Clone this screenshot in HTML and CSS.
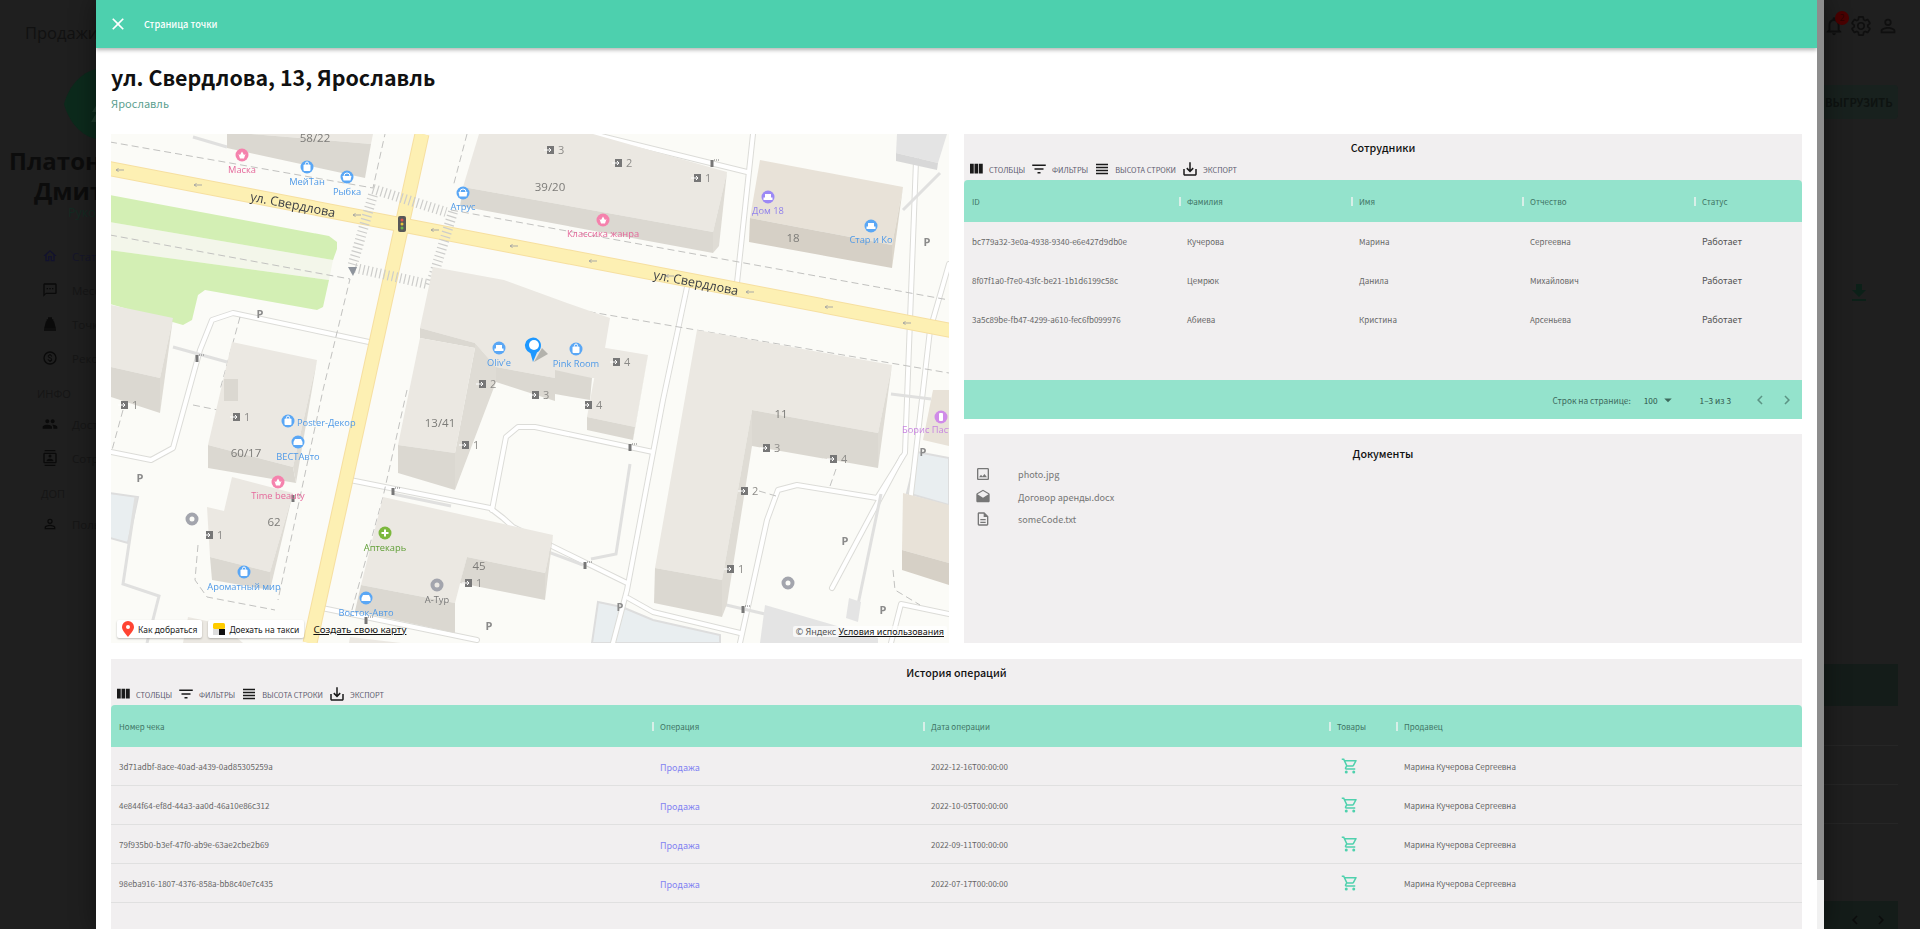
FILE: index.html
```html
<!doctype html>
<html lang="ru">
<head>
<meta charset="utf-8">
<title>Страница точки</title>
<link rel="stylesheet" href="styles.css">
</head>
<body>

<!-- page under the dialog -->
<div class="page">
	<aside class="sidebar">
		<div class="page-title">Продажи</div>
		<div class="logo">
			<svg viewBox="0 0 72 72" width="72" height="72"><path class="logo-leaf" d="M0 36C6 14 22 0 40 0c18 0 32 16 32 36S58 72 40 72C22 72 6 58 0 36z"/><path class="logo-tree" d="M36 12l7 10h-4l7 10h-4l8 12h-5l6 10H27l6-10h-5l8-12h-4l7-10h-4z"/></svg>
		</div>
		<div class="user-name first">Платонов</div>
		<div class="user-name second">Дмитрий</div>
		<div class="user-role">Руководитель</div>
		<nav class="nav">
			<a class="nav-item nav-active"><svg viewBox="0 0 24 24"><path d="M12 5.69l5 4.5V18h-2v-6H9v6H7v-7.81l5-4.5M12 3 2 12h3v8h6v-6h2v6h6v-8h3L12 3z"/></svg>Статистика</a>
			<a class="nav-item"><svg viewBox="0 0 24 24"><path d="M20 2H4c-1.1 0-2 .9-2 2v18l4-4h14c1.1 0 2-.9 2-2V4c0-1.1-.9-2-2-2zm0 14H6l-2 2V4h16v12zM7 9h2v2H7zm4 0h2v2h-2zm4 0h2v2h-2z"/></svg>Мессенджер</a>
			<a class="nav-item"><svg viewBox="0 0 24 24"><path d="M9 2h6v3h2v3h1l3 11H3L6 8h1V5h2V2zm-6 18h18v2H3v-2zM9 11h1.500v6H9zm2.500 0H13v6h-1.500zm2.500 0h1.500v6H14z"/></svg>Точки</a>
			<a class="nav-item"><svg viewBox="0 0 24 24"><path d="M12 2a10 10 0 1 0 0 20 10 10 0 0 0 0-20zm0 18a8 8 0 1 1 0-16 8 8 0 0 1 0 16zm.3-8.900c-1.800-.5-2.300-.9-2.300-1.600 0-.8.700-1.300 1.900-1.300 1.200 0 1.700.6 1.700 1.400h1.500c0-1.100-.7-2.200-2.100-2.500V6h-2v1.100c-1.300.3-2.300 1.100-2.300 2.400 0 1.500 1.300 2.300 3.100 2.800 1.700.4 2.100 1 2.100 1.600 0 .5-.3 1.200-1.900 1.200-1.400 0-2-.6-2-1.400H8.400c.1 1.500 1.200 2.300 2.600 2.600V18h2v-1.100c1.300-.2 2.300-1 2.300-2.400 0-1.900-1.700-2.900-3-3.400z"/></svg>Рекомендации</a>
			<div class="nav-head">ИНФО</div>
			<a class="nav-item"><svg viewBox="0 0 24 24"><path d="M16 11c1.660 0 3-1.340 3-3s-1.340-3-3-3-3 1.340-3 3 1.340 3 3 3zm-8 0c1.660 0 3-1.340 3-3S9.660 5 8 5 5 6.340 5 8s1.340 3 3 3zm0 2c-2.330 0-7 1.170-7 3.500V19h14v-2.500c0-2.330-4.670-3.500-7-3.500zm8 0c-.29 0-.62.020-.97.050 1.160.84 1.970 1.970 1.970 3.450V19h6v-2.500c0-2.330-4.670-3.500-7-3.500z"/></svg>Доступ</a>
			<a class="nav-item"><svg viewBox="0 0 24 24"><path d="M20 0H4v2h16V0zM4 24h16v-2H4v2zM20 4H4c-1.100 0-2 .9-2 2v12c0 1.100.9 2 2 2h16c1.100 0 2-.9 2-2V6c0-1.100-.9-2-2-2zm0 14H4V6h16v12zm-8-11.250a2.250 2.250 0 1 1 0 4.500 2.250 2.250 0 0 1 0-4.500zM17 17H7v-1.500c0-1.670 3.330-2.500 5-2.500s5 .83 5 2.500V17z"/></svg>Сотрудники</a>
			<div class="nav-head last">ДОП</div>
			<a class="nav-item"><svg viewBox="0 0 24 24"><path d="M12 5.900a2.100 2.100 0 1 1 0 4.200 2.100 2.100 0 0 1 0-4.200m0 9c2.970 0 6.100 1.460 6.100 2.100v1.100H5.900V17c0-.64 3.130-2.100 6.100-2.100M12 4a4 4 0 1 0 0 8 4 4 0 0 0 0-8zm0 9c-2.670 0-8 1.340-8 4v3h16v-3c0-2.660-5.330-4-8-4z"/></svg>Пользователи</a>
		</nav>
	</aside>

	<div class="page-right">
		<div class="top-icons">
			<span class="bell">
				<svg viewBox="0 0 24 24"><path d="M12 22c1.100 0 2-.9 2-2h-4c0 1.100.9 2 2 2zm6-6v-5c0-3.070-1.630-5.640-4.500-6.320V4c0-.83-.67-1.500-1.500-1.500s-1.500.67-1.500 1.500v.68C7.640 5.360 6 7.920 6 11v5l-2 2v1h16v-1l-2-2zm-2 1H8v-6c0-2.480 1.510-4.500 4-4.500s4 2.020 4 4.500v6z"/></svg>
				<span class="badge">2</span>
			</span>
			<svg viewBox="0 0 24 24"><path class="gear" d="M19.430 12.980c.04-.32.07-.64.07-.98s-.03-.66-.07-.98l2.110-1.650c.19-.15.24-.42.12-.64l-2-3.460c-.12-.22-.39-.3-.61-.22l-2.490 1c-.52-.4-1.080-.73-1.690-.98l-.38-2.650A.49.49 0 0 0 14 2h-4c-.25 0-.46.18-.49.42l-.38 2.650c-.61.25-1.170.59-1.690.98l-2.490-1c-.23-.09-.49 0-.61.22l-2 3.460c-.13.22-.07.49.12.64l2.110 1.650c-.04.32-.07.65-.07.98s.03.66.07.98l-2.110 1.650c-.19.15-.24.42-.12.64l2 3.460c.12.22.39.3.61.22l2.490-1c.52.4 1.080.73 1.690.98l.38 2.650c.03.24.24.42.49.42h4c.25 0 .46-.18.49-.42l.38-2.650c.61-.25 1.170-.59 1.690-.98l2.490 1c.23.09.49 0 .61-.22l2-3.460c.12-.22.07-.49-.12-.64l-2.110-1.650zM12 15.500a3.500 3.500 0 1 1 0-7 3.500 3.500 0 0 1 0 7z"/></svg>
			<svg viewBox="0 0 24 24"><path d="M12 5.900a2.100 2.100 0 1 1 0 4.200 2.100 2.100 0 0 1 0-4.200m0 9c2.970 0 6.100 1.460 6.100 2.100v1.100H5.900V17c0-.64 3.130-2.100 6.100-2.100M12 4a4 4 0 1 0 0 8 4 4 0 0 0 0-8zm0 9c-2.670 0-8 1.340-8 4v3h16v-3c0-2.660-5.330-4-8-4z"/></svg>
		</div>
		<div class="upload-btn">ВЫГРУЗИТЬ</div>
		<svg class="bg-download" viewBox="0 0 24 24"><path d="M19 9h-4V3H9v6H5l7 7 7-7zM5 18v2h14v-2H5z"/></svg>
		<div class="bg-table-head"></div>
		<div class="bg-line first"></div>
		<div class="bg-line"></div>
		<div class="bg-line"></div>
		<div class="bg-table-foot">
			<svg viewBox="0 0 24 24"><path d="M15.410 7.410 14 6l-6 6 6 6 1.410-1.410L10.830 12z"/></svg>
			<svg viewBox="0 0 24 24"><path d="M10 6 8.590 7.410 13.170 12l-4.580 4.590L10 18l6-6z"/></svg>
		</div>
	</div>
</div>

<!-- dialog -->
<div class="dialog-wrap">
	<div class="dialog">
		<header class="dialog-bar">
			<svg class="close-icon" viewBox="0 0 24 24"><path d="M19 6.410 17.590 5 12 10.590 6.410 5 5 6.410 10.590 12 5 17.590 6.410 19 12 13.410 17.590 19 19 17.590 13.410 12z"/></svg>
			<span class="dialog-title">Страница точки</span>
		</header>

		<div class="dialog-body">
			<h1 class="point-title">ул. Свердлова, 13, Ярославль</h1>
			<div class="point-city">Ярославль</div>

			<div class="top-grid">
				<div class="map">
					<svg class="map-svg" viewBox="0 0 838 509" width="838" height="509">
						<defs>
							<g id="drives">
								<polyline points="0,318 40,326 62,314 89,216 101,186 122,179 258,208"/>
								<polyline points="642,0 626,149"/>
								<polyline points="576,153 552,266 516,456 502,509"/>
								<polyline points="636,38 482,0"/>
								<polyline points="542,318 424,293 407,293 395,303 381,376"/>
								<polyline points="239,346 379,374 392,384 402,393 516,449"/>
								<polyline points="517,464 542,478 629,499"/>
								<polyline points="806,0 794,319 766,364 686,351 667,356 656,386 629,509"/>
								<polyline points="838,130 819,196 799,369"/>
								<polyline points="721,454 791,323"/>
								<polyline points="206,473 366,506"/>
								<polyline points="780,509 790,470 838,480"/>
							</g>
							<g id="door"><rect class="door-box" x="-3" y="-4" width="7" height="8"/><path class="door-arrow" d="M-6 0h7M-1-2l2 2-2 2"/></g>
							<path id="arrow" class="road-arrow" d="M-4 0h8M-4 0l2.500-1.500M-4 0l2.500 1.500"/>
							<g id="gate"><path class="gate-post" d="M-1.500 4V-3h3v7z"/><path class="gate-dots" d="M2-3h6"/></g>
							<g id="i-bag"><rect class="poi-glyph" x="-3.500" y="-2.500" width="7" height="6.500" rx="1"/><path class="poi-line" d="M-1.500-2.500v-1a1.500 1.500 0 0 1 3 0v1"/></g>
							<g id="i-basket"><path class="poi-glyph" d="M-4.500-1h9L3.500 3.500h-7z"/><path class="poi-line" d="M-3-1a3 3 0 0 1 6 0"/></g>
							<g id="i-sofa"><path class="poi-glyph" d="M-3-3h6v3.500h1.500V3h-9V.500H-3z"/></g>
							<g id="i-car"><path class="poi-glyph" d="M-3-3h6l1.500 3v3h-9V0z"/></g>
							<g id="i-hands"><path class="poi-glyph" d="M-3.500-1-2 3.500h4L3.500-1 2 0 0-3.500-2 0z"/></g>
						</defs>

						<rect class="m-ground" width="838" height="509"/>

						<!-- lots and green -->
						<polygon class="m-water" points="-1,359 27,363 17,409 -1,404"/>
						<polygon class="m-water" points="487,468 511,473 542,486 609,501 609,509 481,509"/>
						<polygon class="m-water" points="806,318 838,324 838,371 796,359"/>
						<polygon class="m-pale" points="-1,88 222,126 218,146 -1,116"/>
						<polygon class="m-green" points="-1,61 218,102 226,108 226,115 222,126 -1,88"/>
						<polygon class="m-green" points="-1,116 218,146 212,173 206,176 94,156 87,161 81,186 72,191 -1,170"/>

						<!-- yard drives -->
						<use href="#drives" class="drive-edge"/>
						<use href="#drives" class="drive-fill"/>
						<polyline class="gray-strip" points="62,213 116,228"/>
						<polyline class="gray-strip" points="829,39 792,76"/>
						<polyline class="gray-strip" points="282,360 340,372"/>
						<polyline class="gray-strip" points="424,413 472,431"/>
						<polyline class="gray-strip" points="611,470 654,480"/>
						<polyline class="gray-strip" points="780,260 820,265"/>
						<polyline class="gray-strip" points="519,330 505,420 480,425"/>
						<polyline class="gray-strip" points="770,360 745,480"/>
						<polyline class="gray-strip" points="82,3 116,13"/>
						<polyline class="gray-strip" points="25,363 12,450 48,462 36,509"/>

						<!-- streets -->
						<line class="road-edge" x1="-10" y1="33" x2="848" y2="198"/>
						<line class="road-edge" x1="311" y1="0" x2="199" y2="509"/>
						<line class="road" x1="-10" y1="33" x2="848" y2="198"/>
						<line class="road" x1="311" y1="0" x2="199" y2="509"/>
						<line class="zebra" x1="262" y1="55" x2="335" y2="78"/>
						<line class="zebra-v" x1="262" y1="61" x2="241" y2="133"/>
						<line class="zebra-v" x1="342" y1="78" x2="319" y2="153"/>
						<line class="zebra" x1="244" y1="134" x2="316" y2="150"/>

						<!-- footpaths -->
						<g class="dash">
							<polyline points="-1,8 262,54 274,0"/>
							<polyline points="356,0 342,53"/>
							<polyline points="340,76 838,166"/>
							<polyline points="-1,101 239,145 212,256 167,466"/>
							<polyline points="319,146 419,166"/>
							<polyline points="456,174 838,239"/>
							<polyline points="296,256 272,363 239,483"/>
							<polyline points="87,411 84,446 96,463 164,476"/>
							<polyline points="82,271 122,279"/>
							<polyline points="129,183 109,256"/>
							<polyline points="12,276 1,316"/>
							<polyline points="782,436 784,456 809,471"/>
							<polyline points="725,335 718,355"/>
							<polyline points="648,357 665,362"/>
						</g>

						<!-- buildings -->
						<polygon class="b-top" points="140,0 262,0 260,10"/>
						<polygon class="b-front" points="116,0 140,0 260,10 254,44 116,14"/>
						<polygon class="b-top" points="352,53 368,0 482,0 616,38 602,98"/>
						<polygon class="b-front" points="352,53 602,98 602,119 349,72"/>
						<polygon class="b-side" points="616,38 602,98 602,119 608,112"/>

						<polygon class="h-top" points="649,26 792,53 781,111 639,84"/>
						<polygon class="h-front" points="639,84 781,111 781,134 638,108"/>
						<polygon class="h-side" points="792,53 781,134 781,111"/>

						<polygon class="g-top" points="786,0 836,0 827,29 785,19"/>
						<polygon class="g-front" points="785,19 827,29 826,36 785,27"/>

						<polygon class="b-top" points="322,133 393,146 456,169 499,184 489,244 444,244 385,233 364,209 309,194"/>
						<polygon class="b-front" points="309,194 364,209 364,214 309,204"/>
						<polygon class="b-side" points="364,209 385,233 385,248 344,356 344,319 364,214"/>
						<polygon class="b-front" points="385,233 444,244 444,267 385,248"/>
						<polygon class="b-top" points="444,244 444,236 489,244 481,244"/>
						<polygon class="b-front" points="444,236 481,244 479,266 444,260"/>
						<polygon class="b-top" points="287,311 344,319 364,214 309,204"/>
						<polygon class="b-front" points="287,311 344,319 344,356 287,339"/>
						<polygon class="b-top" points="489,213 537,221 524,293 476,283"/>
						<polygon class="b-front" points="476,283 524,293 522,306 476,296"/>
						<polygon class="b-side" points="537,221 524,293 522,306"/>

						<polygon class="b-top" points="121,208 206,226 182,333 97,311"/>
						<polygon class="b-front" points="97,311 182,333 185,349 97,334"/>
						<polygon class="b-side" points="206,226 185,349 182,333"/>
						<rect class="b-front" x="113" y="245" width="14" height="22"/>

						<polygon class="b-top" points="121,343 182,359 159,438 99,423 96,373 113,377"/>
						<polygon class="b-front" points="99,423 159,438 159,456 101,446"/>
						<polygon class="b-side" points="182,359 159,456 159,438"/>

						<polygon class="b-top" points="0,171 62,184 49,244 0,233"/>
						<polygon class="b-front" points="0,233 49,244 49,279 0,263"/>
						<polygon class="b-side" points="62,184 49,279 49,244"/>

						<polygon class="b-top" points="272,363 442,401 434,439 356,423 344,469 250,451"/>
						<polygon class="b-front" points="250,451 344,469 344,499 244,477"/>
						<polygon class="b-front" points="356,423 434,439 434,466 349,449"/>
						<polygon class="b-side" points="442,401 434,466 434,439"/>

						<polygon class="b-top" points="77,483 110,490 132,509 72,509"/>
						<polygon class="b-top" points="239,503 290,509 238,509"/>

						<polygon class="b-top" points="586,196 781,231 767,299 641,276 611,446 544,434"/>
						<polygon class="b-front" points="544,434 611,446 611,483 543,469"/>
						<polygon class="b-front" points="641,276 767,299 767,334 641,312"/>
						<polygon class="b-side" points="781,231 767,334 767,299"/>
						<polygon class="b-side" points="641,276 641,312 616,470 611,483 611,446"/>

						<polygon class="h-top" points="792,359 838,371 838,429 791,416"/>
						<polygon class="h-front" points="791,416 838,429 838,451 791,436"/>
						<polygon class="h-top" points="822,256 838,256 838,312 812,306"/>
						<polygon class="g-top" points="654,471 767,504 767,509 649,509"/>
						<polygon class="g-top" points="738,464 750,468 747,488 735,484"/>

						<!-- traffic light -->
						<rect class="light-box" x="287" y="82" width="8" height="16" rx="2"/>
						<circle class="light-r" cx="291" cy="86" r="1.500"/>
						<circle class="light-y" cx="291" cy="90" r="1.500"/>
						<circle class="light-g" cx="291" cy="94" r="1.500"/>
						<path class="walk-mark" d="M237 133h9l-4 9z"/>

						<use href="#arrow" x="9" y="36"/><use href="#arrow" x="87" y="51"/><use href="#arrow" x="246" y="81"/>
						<use href="#arrow" x="324" y="96"/><use href="#arrow" x="403" y="112"/><use href="#arrow" x="482" y="127"/>
						<use href="#arrow" x="559" y="142"/><use href="#arrow" x="639" y="158"/><use href="#arrow" x="718" y="173"/>
						<use href="#arrow" x="796" y="189"/>

						<text class="street" transform="translate(181 75) rotate(11)">ул. Свердлова</text>
						<text class="street" transform="translate(584 153) rotate(11)">ул. Свердлова</text>

						<!-- house numbers -->
						<g class="num">
							<text x="204" y="8">58/22</text><text x="439" y="57">39/20</text><text x="682" y="108">18</text>
							<text x="329" y="293">13/41</text><text x="135" y="323">60/17</text><text x="163" y="392">62</text>
							<text x="368" y="436">45</text><text x="670" y="284">11</text>
						</g>

						<!-- entrances -->
						<use href="#door" x="439" y="16"/><use href="#door" x="507" y="29"/><use href="#door" x="586" y="44"/>
						<use href="#door" x="371" y="250"/><use href="#door" x="424" y="261"/><use href="#door" x="505" y="228"/>
						<use href="#door" x="477" y="271"/><use href="#door" x="125" y="283"/><use href="#door" x="13" y="271"/>
						<use href="#door" x="354" y="311"/><use href="#door" x="98" y="401"/><use href="#door" x="357" y="449"/>
						<use href="#door" x="655" y="314"/><use href="#door" x="722" y="325"/><use href="#door" x="633" y="357"/>
						<use href="#door" x="619" y="435"/>
						<g class="door-num">
							<text x="447" y="20">3</text><text x="515" y="33">2</text><text x="594" y="48">1</text>
							<text x="379" y="254">2</text><text x="432" y="265">3</text><text x="513" y="232">4</text>
							<text x="485" y="275">4</text><text x="133" y="287">1</text><text x="21" y="275">1</text>
							<text x="362" y="315">1</text><text x="106" y="405">1</text><text x="365" y="453">1</text>
							<text x="663" y="318">3</text><text x="730" y="329">4</text><text x="641" y="361">2</text>
							<text x="627" y="439">1</text>
						</g>

						<use href="#gate" x="86" y="224"/><use href="#gate" x="282" y="357"/><use href="#gate" x="255" y="486"/>
						<use href="#gate" x="519" y="313"/><use href="#gate" x="474" y="431"/><use href="#gate" x="632" y="475"/>
						<use href="#gate" x="601" y="29"/><use href="#gate" x="182" y="364"/>

						<g class="park">
							<text x="149" y="184">P</text><text x="816" y="112">P</text><text x="734" y="411">P</text><text x="812" y="322">P</text>
							<text x="29" y="348">P</text><text x="378" y="496">P</text><text x="772" y="480">P</text><text x="509" y="477">P</text>
						</g>

						<!-- organisations -->
						<circle class="c-pink" cx="131" cy="21" r="6.500"/><use href="#i-hands" x="131" y="21"/>
						<text class="lbl t-pink" x="131" y="39">Маска</text>
						<circle class="c-blue" cx="196" cy="33" r="6.500"/><use href="#i-bag" x="196" y="33"/>
						<text class="lbl t-blue" x="196" y="51">МейТан</text>
						<circle class="c-blue" cx="236" cy="43" r="6.500"/><use href="#i-basket" x="236" y="43"/>
						<text class="lbl t-blue" x="236" y="61">Рыбка</text>
						<circle class="c-blue" cx="352" cy="59" r="6.500"/><use href="#i-basket" x="352" y="59"/>
						<text class="lbl t-blue" x="352" y="76">Атрус</text>
						<circle class="c-pink" cx="492" cy="86" r="6.500"/><use href="#i-hands" x="492" y="86"/>
						<text class="lbl t-pink" x="492" y="103">Классика жанра</text>
						<circle class="c-purple" cx="657" cy="63" r="6.500"/><use href="#i-sofa" x="657" y="63"/>
						<text class="lbl t-purple" x="657" y="80">Дом 18</text>
						<circle class="c-blue" cx="760" cy="92" r="6.500"/><use href="#i-sofa" x="760" y="92"/>
						<text class="lbl t-blue" x="760" y="109">Стар и Ко</text>
						<circle class="c-blue" cx="388" cy="214" r="6.500"/><use href="#i-sofa" x="388" y="214"/>
						<text class="lbl t-blue" x="388" y="232">Oliv'e</text>
						<circle class="c-blue" cx="465" cy="215" r="6.500"/><use href="#i-bag" x="465" y="215"/>
						<text class="lbl t-blue" x="465" y="233">Pink Room</text>
						<circle class="c-blue" cx="177" cy="287" r="6.500"/><use href="#i-bag" x="177" y="287"/>
						<text class="lbl t-blue start" x="186" y="292">Poster-Декор</text>
						<circle class="c-blue" cx="187" cy="308" r="6.500"/><use href="#i-car" x="187" y="308"/>
						<text class="lbl t-blue" x="187" y="326">ВЕСТАвто</text>
						<circle class="c-pink" cx="167" cy="348" r="6.500"/><use href="#i-hands" x="167" y="348"/>
						<text class="lbl t-pink" x="167" y="365">Time beauty</text>
						<circle class="c-green" cx="274" cy="399" r="6.500"/><path class="poi-line thick" d="M270.500 399h7M274 395.500v7"/>
						<text class="lbl t-green" x="274" y="417">Аптекарь</text>
						<circle class="c-blue" cx="133" cy="438" r="6.500"/><use href="#i-bag" x="133" y="438"/>
						<text class="lbl t-blue" x="133" y="456">Ароматный мир</text>
						<circle class="c-blue" cx="255" cy="464" r="6.500"/><use href="#i-car" x="255" y="464"/>
						<text class="lbl t-blue" x="255" y="482">Восток-Авто</text>
						<circle class="donut" cx="326" cy="451" r="4.500"/>
						<text class="lbl t-gray" x="326" y="469">А-Тур</text>
						<circle class="donut" cx="81" cy="385" r="4.500"/>
						<circle class="donut" cx="677" cy="449" r="4.500"/>
						<circle class="c-violet" cx="830" cy="283" r="6.500"/><rect class="poi-glyph" x="828" y="279" width="4" height="8" rx="1"/>
						<text class="lbl t-violet start" x="791" y="299">Борис Пастернак</text>

						<!-- point marker -->
						<path class="pin-shadow" d="M423 228l14-8-6-6z"/>
						<path class="pin" d="M422 228l4-9.500a8 8 0 1 0-6.500.7z"/>
						<circle class="pin-hole" cx="423" cy="211" r="5"/>
					</svg>

					<div class="map-controls">
						<div class="map-chip">
							<svg width="12" height="16" viewBox="0 0 12 16"><path class="chip-pin" d="M6 0a6 6 0 0 1 6 6c0 3.500-3.500 6.500-6 10C3.500 12.500 0 9.500 0 6a6 6 0 0 1 6-6z"/><circle class="chip-hole" cx="6" cy="6" r="2"/></svg>
							Как добраться
						</div>
						<div class="map-chip">
							<svg width="12" height="12" viewBox="0 0 12 12"><rect class="taxi-y" width="12" height="6" rx="1.500"/><rect class="taxi-g" y="6" width="6" height="6"/><rect class="taxi-k" x="6" y="6" width="6" height="6"/></svg>
							Доехать на такси
						</div>
						<a class="map-link">Создать свою карту</a>
					</div>
					<div class="map-copy">© Яндекс <a>Условия использования</a></div>
				</div>

				<div class="right-col">
					<section class="panel">
						<div class="panel-title">Сотрудники</div>
						<div class="toolbar">
							<span class="tool"><svg viewBox="0 0 24 24"><path d="M10 18h5V5h-5v13zm-6 0h5V5H4v13zM16 5v13h5V5h-5z"/></svg>СТОЛБЦЫ</span>
							<span class="tool"><svg viewBox="0 0 24 24"><path d="M10 18h4v-2h-4v2zM3 6v2h18V6H3zm3 7h12v-2H6v2z"/></svg>ФИЛЬТРЫ</span>
							<span class="tool"><svg viewBox="0 0 24 24"><path d="M4 15h16v-2H4v2zm0 4h16v-2H4v2zm0-8h16V9H4v2zm0-6v2h16V5H4z"/></svg>ВЫСОТА СТРОКИ</span>
							<span class="tool"><svg viewBox="0 0 24 24"><path d="M19 12v7H5v-7H3v7c0 1.100.9 2 2 2h14c1.100 0 2-.9 2-2v-7h-2zm-6 .67l2.590-2.580L17 11.500l-5 5-5-5 1.410-1.410L11 12.670V3h2z"/></svg>ЭКСПОРТ</span>
						</div>
						<div class="grid-head emp-cols">
							<span class="th">ID</span><span class="th sep">Фамилия</span><span class="th sep">Имя</span><span class="th sep">Отчество</span><span class="th sep">Статус</span>
						</div>
						<div class="emp-rows">
							<div class="grid-row emp-cols"><span class="td">bc779a32-3e0a-4938-9340-e6e427d9db0e</span><span class="td">Кучерова</span><span class="td">Марина</span><span class="td">Сергеевна</span><span class="td status">Работает</span></div>
							<div class="grid-row emp-cols"><span class="td">8f07f1a0-f7e0-43fc-be21-1b1d6199c58c</span><span class="td">Цемрюк</span><span class="td">Данила</span><span class="td">Михайлович</span><span class="td status">Работает</span></div>
							<div class="grid-row emp-cols"><span class="td">3a5c89be-fb47-4299-a610-fec6fb099976</span><span class="td">Абиева</span><span class="td">Кристина</span><span class="td">Арсеньева</span><span class="td status">Работает</span></div>
						</div>
						<div class="grid-foot">
							<span>Строк на странице:</span>
							<span class="per-page">100<svg viewBox="0 0 24 24"><path d="M7 10l5 5 5-5z"/></svg></span>
							<span class="range">1–3 из 3</span>
							<svg class="pager" viewBox="0 0 24 24"><path d="M15.410 7.410 14 6l-6 6 6 6 1.410-1.410L10.830 12z"/></svg>
							<svg class="pager" viewBox="0 0 24 24"><path d="M10 6 8.590 7.410 13.170 12l-4.580 4.590L10 18l6-6z"/></svg>
						</div>
					</section>

					<section class="panel docs">
						<div class="panel-title docs-title">Документы</div>
						<div class="doc"><svg viewBox="0 0 24 24"><path d="M19 5v14H5V5h14m0-2H5c-1.100 0-2 .9-2 2v14c0 1.100.9 2 2 2h14c1.100 0 2-.9 2-2V5c0-1.100-.9-2-2-2zm-4.860 8.860-3 3.870L9 13.140 6 17h12l-3.860-5.140z"/></svg>photo.jpg</div>
						<div class="doc"><svg viewBox="0 0 24 24"><path d="M21.990 8c0-.72-.37-1.350-.94-1.700L12 1 2.950 6.300C2.380 6.650 2 7.280 2 8v10c0 1.100.9 2 2 2h16c1.100 0 2-.9 2-2l-.01-10zM12 13 3.740 7.840 12 3l8.260 4.840L12 13z"/></svg>Договор аренды.docx</div>
						<div class="doc"><svg viewBox="0 0 24 24"><path d="M8 16h8v2H8zm0-4h8v2H8zm6-10H6c-1.100 0-2 .9-2 2v16c0 1.100.89 2 1.990 2H18c1.100 0 2-.9 2-2V8l-6-6zm4 18H6V4h7v5h5v11z"/></svg>someCode.txt</div>
					</section>
				</div>
			</div>

			<section class="panel history">
				<div class="panel-title">История операций</div>
				<div class="toolbar">
					<span class="tool"><svg viewBox="0 0 24 24"><path d="M10 18h5V5h-5v13zm-6 0h5V5H4v13zM16 5v13h5V5h-5z"/></svg>СТОЛБЦЫ</span>
					<span class="tool"><svg viewBox="0 0 24 24"><path d="M10 18h4v-2h-4v2zM3 6v2h18V6H3zm3 7h12v-2H6v2z"/></svg>ФИЛЬТРЫ</span>
					<span class="tool"><svg viewBox="0 0 24 24"><path d="M4 15h16v-2H4v2zm0 4h16v-2H4v2zm0-8h16V9H4v2zm0-6v2h16V5H4z"/></svg>ВЫСОТА СТРОКИ</span>
					<span class="tool"><svg viewBox="0 0 24 24"><path d="M19 12v7H5v-7H3v7c0 1.100.9 2 2 2h14c1.100 0 2-.9 2-2v-7h-2zm-6 .67l2.590-2.580L17 11.500l-5 5-5-5 1.410-1.410L11 12.670V3h2z"/></svg>ЭКСПОРТ</span>
				</div>
				<div class="grid-head hist-cols">
					<span class="th">Номер чека</span><span class="th sep">Операция</span><span class="th sep">Дата операции</span><span class="th sep">Товары</span><span class="th sep">Продавец</span>
				</div>
				<div class="grid-row hist-cols lined"><span class="td">3d71adbf-8ace-40ad-a439-0ad85305259a</span><a class="td link">Продажа</a><span class="td">2022-12-16T00:00:00</span><span class="td"><svg class="cart" viewBox="0 0 24 24"><path d="M15.550 13c.75 0 1.410-.41 1.750-1.030l3.580-6.490c.37-.66-.11-1.480-.87-1.480H5.210l-.94-2H1v2h2l3.600 7.590-1.350 2.440C4.520 15.370 5.480 17 7 17h12v-2H7l1.100-2h7.450zM6.160 6h12.150l-2.760 5H8.530L6.160 6zM7 18a2 2 0 1 0 0 4 2 2 0 0 0 0-4zm10 0a2 2 0 1 0 0 4 2 2 0 0 0 0-4z"/></svg></span><span class="td">Марина Кучерова Сергеевна</span></div>
				<div class="grid-row hist-cols lined"><span class="td">4e844f64-ef8d-44a3-aa0d-46a10e86c312</span><a class="td link">Продажа</a><span class="td">2022-10-05T00:00:00</span><span class="td"><svg class="cart" viewBox="0 0 24 24"><path d="M15.550 13c.75 0 1.410-.41 1.750-1.030l3.580-6.490c.37-.66-.11-1.480-.87-1.480H5.210l-.94-2H1v2h2l3.600 7.590-1.350 2.440C4.520 15.370 5.480 17 7 17h12v-2H7l1.100-2h7.450zM6.160 6h12.150l-2.760 5H8.530L6.160 6zM7 18a2 2 0 1 0 0 4 2 2 0 0 0 0-4zm10 0a2 2 0 1 0 0 4 2 2 0 0 0 0-4z"/></svg></span><span class="td">Марина Кучерова Сергеевна</span></div>
				<div class="grid-row hist-cols lined"><span class="td">79f935b0-b3ef-47f0-ab9e-63ae2cbe2b69</span><a class="td link">Продажа</a><span class="td">2022-09-11T00:00:00</span><span class="td"><svg class="cart" viewBox="0 0 24 24"><path d="M15.550 13c.75 0 1.410-.41 1.750-1.030l3.580-6.490c.37-.66-.11-1.480-.87-1.480H5.210l-.94-2H1v2h2l3.600 7.590-1.350 2.440C4.520 15.370 5.480 17 7 17h12v-2H7l1.100-2h7.450zM6.160 6h12.150l-2.760 5H8.530L6.160 6zM7 18a2 2 0 1 0 0 4 2 2 0 0 0 0-4zm10 0a2 2 0 1 0 0 4 2 2 0 0 0 0-4z"/></svg></span><span class="td">Марина Кучерова Сергеевна</span></div>
				<div class="grid-row hist-cols lined"><span class="td">98eba916-1807-4376-858a-bb8c40e7c435</span><a class="td link">Продажа</a><span class="td">2022-07-17T00:00:00</span><span class="td"><svg class="cart" viewBox="0 0 24 24"><path d="M15.550 13c.75 0 1.410-.41 1.750-1.030l3.580-6.490c.37-.66-.11-1.480-.87-1.480H5.210l-.94-2H1v2h2l3.600 7.590-1.350 2.440C4.520 15.370 5.480 17 7 17h12v-2H7l1.100-2h7.450zM6.160 6h12.150l-2.760 5H8.530L6.160 6zM7 18a2 2 0 1 0 0 4 2 2 0 0 0 0-4zm10 0a2 2 0 1 0 0 4 2 2 0 0 0 0-4z"/></svg></span><span class="td">Марина Кучерова Сергеевна</span></div>
				<div class="history-rest"></div>
			</section>
		</div>
	</div>
	<div class="scroll-track"><div class="scroll-thumb"></div></div>
</div>
</body>
</html>
```

FILE: styles.css
```css
html,body{
	margin:0;
	height:100%;
	overflow:hidden;
	background:#1f1f1f;
	font-family:"Noto Sans CJK SC","Noto Sans",sans-serif;
}

svg{
	display:block;
}

/* page under the dialog */
.page{
	display:flex;
	justify-content:space-between;
	height:929px;
	font-family:"Open Sans","Noto Sans",sans-serif;
	color:#0c0c0c;
}

.sidebar{
	width:96px;
	overflow:hidden;
	white-space:nowrap;
}

.page-title{
	margin:19px 0 0 25px;
	font-size:16.500px;
	line-height:28px;
	color:#111;
}

.logo{
	margin:21px 0 0 64px;
}

.logo-leaf{
	fill:#0c2a1c;
}

.logo-tree{
	fill:#1e3c2c;
}

.user-name{
	font-size:24px;
	font-weight:700;
	line-height:30px;
}

.user-name.first{
	margin:6px 0 0 9px;
}

.user-name.second{
	margin-left:34px;
}

.user-role{
	margin:-3px 0 0 68px;
	font-size:12.500px;
	line-height:20px;
	color:#142a22;
}

.nav{
	margin-top:16px;
}

.nav-item{
	display:flex;
	align-items:center;
	gap:14px;
	height:34px;
	padding-left:42px;
	font-size:11.500px;
	color:#161616;
}

.nav-item svg{
	width:16px;
	height:16px;
	flex:none;
	fill:#0a0a0a;
}

.nav-active{
	color:#16162a;
}

.nav-active svg{
	fill:#12122e;
}

.nav-head{
	margin:10px 0 4px 37px;
	font-size:11px;
	line-height:18px;
	color:#151515;
}

.nav-head.last{
	margin:10px 0 4px 41px;
}

.page-right{
	width:96px;
	padding-right:22px;
	box-sizing:border-box;
	flex:none;
	display:flex;
	flex-direction:column;
	align-items:flex-end;
}

.top-icons{
	display:flex;
	gap:5px;
	margin:15px -1px 0 -2px;
}

.top-icons svg{
	width:22px;
	height:22px;
	fill:#0f0f0f;
}

.top-icons .gear{
	fill:none;
	stroke:#0f0f0f;
	stroke-width:1.800;
}

.bell{
	position:relative;
}

.badge{
	position:absolute;
	top:-4px;
	left:12px;
	width:14px;
	height:14px;
	border-radius:50%;
	background:#4a0000;
	color:#2a0000;
	font-size:9px;
	line-height:14px;
	text-align:center;
}

.upload-btn{
	width:74px;
	height:34px;
	margin:48px 0 0;
	padding-left:1px;
	box-sizing:border-box;
	border-radius:0 4px 4px 0;
	background:#18211e;
	font-family:"Noto Sans CJK SC",sans-serif;
	font-size:11px;
	font-weight:700;
	line-height:34px;
	color:#0e1311;
	overflow:hidden;
	white-space:nowrap;
	flex:none;
}

.bg-download{
	width:24px;
	height:24px;
	margin:162px 27px 0 0;
	fill:#0c2018;
	flex:none;
}

.bg-table-head{
	width:74px;
	height:42px;
	margin-top:359px;
	background:#141c19;
	flex:none;
}

.bg-line{
	width:74px;
	height:1px;
	margin-top:38px;
	background:#262626;
	flex:none;
}

.bg-line.first{
	margin-top:39px;
}

.bg-table-foot{
	display:flex;
	justify-content:flex-end;
	gap:8px;
	width:74px;
	height:29px;
	margin-top:77px;
	padding:10px 8px 0 0;
	box-sizing:border-box;
	background:#141c19;
	flex:none;
}

.bg-table-foot svg{
	width:18px;
	height:18px;
	fill:#0c0c0c;
}

/* dialog */
.dialog-wrap{
	position:fixed;
	top:0;
	bottom:0;
	left:96px;
	right:96px;
	display:flex;
	box-shadow:0 0 24px rgba(0,0,0,.45);
}

.dialog{
	flex:1;
	min-width:0;
	overflow:hidden;
	background:#fff;
}

.scroll-track{
	width:7px;
	background:#f1f1f1;
}

.scroll-thumb{
	height:880px;
	background:#8d8d8d;
}

.dialog-bar{
	display:flex;
	align-items:center;
	height:48px;
	padding-left:12px;
	background:#4dd0ae;
	box-shadow:0 2px 4px rgba(0,0,0,.3);
	color:#fff;
	position:relative;
}

.close-icon{
	width:20px;
	height:20px;
	fill:#fff;
}

.dialog-title{
	margin-left:16px;
	font-size:9.200px;
	font-weight:500;
}

.dialog-body{
	padding:0 15px;
}

.point-title{
	margin:0;
	padding-top:14px;
	font-size:21.400px;
	font-weight:700;
	line-height:30px;
	color:#111;
}

.point-city{
	margin-top:2px;
	font-size:11px;
	line-height:18px;
	color:#5d9f90;
}

.top-grid{
	display:grid;
	grid-template-columns:838px 838px;
	gap:15px;
	margin-top:22px;
	height:509px;
}

/* map */
.map{
	position:relative;
	width:838px;
	height:509px;
	overflow:hidden;
}

.map-svg{
	filter:blur(.35px);
}

.m-ground{fill:#fbfbf7;}
.m-water{fill:#e9eef0;stroke:#ddd;stroke-width:2;}
.m-pale{fill:#f3f6ea;}
.m-green{fill:#d3efb4;}
.drive-edge{fill:none;stroke:#dcdcd8;stroke-width:6;stroke-linejoin:round;stroke-linecap:round;}
.drive-fill{fill:none;stroke:#fff;stroke-width:4;stroke-linejoin:round;stroke-linecap:round;}
.gray-strip{fill:none;stroke:#e0e0df;stroke-width:3;}
.road-edge{stroke:#f6dfa0;stroke-width:15;}
.road{stroke:#fdf0b3;stroke-width:13;}
.zebra{stroke:#cdcdcb;stroke-width:10;stroke-dasharray:1.200 3;}
.zebra-v{stroke:#cdcdcb;stroke-width:10;stroke-dasharray:1.200 3;}
.dash{fill:none;stroke:#c2c2c0;stroke-width:1;stroke-dasharray:7 4;}
.b-top{fill:#ebe8e2;}
.b-front{fill:#dbd8d1;}
.b-side{fill:#dfdcd5;}
.h-top{fill:#e8e2d8;}
.h-front{fill:#d6d0c6;}
.h-side{fill:#dcd6cb;}
.g-top{fill:#e4e4e4;}
.g-front{fill:#d8d8d8;}
.light-box{fill:#585858;}
.light-r{fill:#e2574c;}
.light-y{fill:#e6c63c;}
.light-g{fill:#6cb348;}
.walk-mark{fill:#8e949c;}
.road-arrow{fill:none;stroke:#a9a9a5;stroke-width:1;}
.door-box{fill:#777;}
.door-arrow{fill:none;stroke:#fff;stroke-width:1;}
.gate-post{fill:#777;}
.gate-dots{stroke:#777;stroke-width:1;stroke-dasharray:1 1;}
.poi-glyph{fill:#fff;}
.poi-line{fill:none;stroke:#fff;stroke-width:1;}
.poi-line.thick{stroke-width:2;}
.c-blue{fill:#5aa7f5;}
.c-pink{fill:#f582ad;}
.c-purple{fill:#9c89f5;}
.c-green{fill:#7cb83d;}
.c-violet{fill:#d08be8;}
.donut{fill:none;stroke:#a3a5ad;stroke-width:4;}

.map-svg text{
	font-family:"Open Sans","Noto Sans",sans-serif;
}

.street{
	font-size:12.600px;
	text-anchor:middle;
	fill:#3a3d45;
}

.num text{
	font-size:11.500px;
	text-anchor:middle;
	fill:#7c7b78;
}

.door-num text{
	font-size:11px;
	fill:#8c8b88;
}

.park text{
	font-size:11px;
	font-weight:700;
	text-anchor:middle;
	fill:#8a8a8a;
}

.lbl{
	font-size:9.300px;
	text-anchor:middle;
}

.lbl.start{
	text-anchor:start;
}

.t-blue{fill:#4f9ae8;}
.t-pink{fill:#e5689b;}
.t-purple{fill:#9080ec;}
.t-green{fill:#5f9e35;}
.t-gray{fill:#777;}
.t-violet{fill:#c885e0;}

.pin{fill:#1e98ff;}
.pin-hole{fill:#fff;}
.pin-shadow{fill:#8d8d88;opacity:.6;}

.map-controls{
	position:absolute;
	left:6px;
	bottom:5px;
	display:flex;
	align-items:center;
	gap:6px;
}

.map-chip{
	display:flex;
	align-items:center;
	gap:4px;
	height:18px;
	padding:0 5px;
	border-radius:2px;
	background:#fff;
	box-shadow:0 1px 2px rgba(0,0,0,.25);
	font-family:"Noto Sans",sans-serif;
	font-size:8.500px;
	color:#222;
}

.chip-pin{fill:#f43;}
.chip-hole{fill:#fff;}
.taxi-y{fill:#fc0;}
.taxi-g{fill:#ddd;}
.taxi-k{fill:#111;}

.map-link{
	margin-left:3px;
	font-family:"Noto Sans",sans-serif;
	font-size:9.800px;
	color:#111;
	text-decoration:underline;
}

.map-copy{
	position:absolute;
	right:2px;
	bottom:6px;
	padding:0 3px;
	height:11px;
	border-radius:2px;
	background:rgba(255,255,255,.7);
	font-family:"Noto Sans",sans-serif;
	font-size:9px;
	line-height:11px;
	color:#555;
}

.map-copy a{
	color:#111;
	text-decoration:underline;
}

/* panels */
.right-col{
	display:flex;
	flex-direction:column;
	gap:15px;
}

.panel{
	background:#f1eff0;
}

.panel-title{
	height:28px;
	font-size:10.700px;
	font-weight:500;
	line-height:28px;
	text-align:center;
	color:#111;
}

.toolbar{
	display:flex;
	align-items:center;
	gap:5px;
	height:18px;
	padding:0 0 4px 3px;
	box-sizing:border-box;
}

.tool{
	display:flex;
	align-items:center;
	gap:4px;
	font-size:7.400px;
	color:#5b5a6e;
}

.tool svg{
	width:18px;
	height:18px;
	fill:#1a1a1a;
}

.grid-head{
	display:grid;
	height:42px;
	align-items:center;
	background:#94e3cc;
	border-radius:4px 4px 0 0;
}

.emp-cols{
	grid-template-columns:215px 172px 171px 172px 1fr;
}

.hist-cols{
	grid-template-columns:541px 271px 406px 67px 1fr;
}

.th{
	display:flex;
	align-items:center;
	height:14px;
	padding-left:8px;
	font-size:8px;
	color:#3f7465;
}

.th.sep{
	padding-left:0;
}

.th.sep::before{
	content:"";
	width:2px;
	height:9px;
	margin-right:6px;
	background:#d8efe8;
}

.emp-rows{
	height:158px;
}

.grid-row{
	display:grid;
	height:39px;
	align-items:center;
}

.grid-row.lined{
	box-sizing:border-box;
	border-bottom:1px solid #e0e0e0;
}

.td{
	padding-left:8px;
	font-size:8px;
	color:#666;
	white-space:nowrap;
}

.status{
	font-size:9px;
	color:#555;
}

.link{
	font-size:9px;
	color:#8383f2;
	padding-top:2px;
}

.cart{
	width:18px;
	height:18px;
	margin-left:4px;
	fill:#4fd1ad;
}

.grid-foot{
	display:flex;
	align-items:center;
	justify-content:flex-end;
	height:39px;
	padding-right:6px;
	background:#94e3cc;
	font-size:8.300px;
	color:#3d6a5d;
}

.per-page{
	display:flex;
	align-items:center;
	margin-left:13px;
	color:#2e5549;
}

.per-page svg{
	width:18px;
	height:18px;
	margin-left:1px;
	fill:#3d6a5d;
}

.range{
	margin:0 11px 0 23px;
	color:#2e5549;
}

.pager{
	width:18px;
	height:18px;
	margin-left:9px;
	fill:#5c9484;
}

.docs{
	flex:1;
}

.docs-title{
	height:18px;
	padding-top:11px;
	line-height:18px;
}

.doc{
	display:flex;
	align-items:center;
	gap:27px;
	height:22.500px;
	padding-left:11px;
	font-size:9.100px;
	color:#767676;
}

.doc svg{
	width:16px;
	height:16px;
	fill:#777;
}

.history{
	margin-top:16px;
}

.history-rest{
	height:60px;
}
```
